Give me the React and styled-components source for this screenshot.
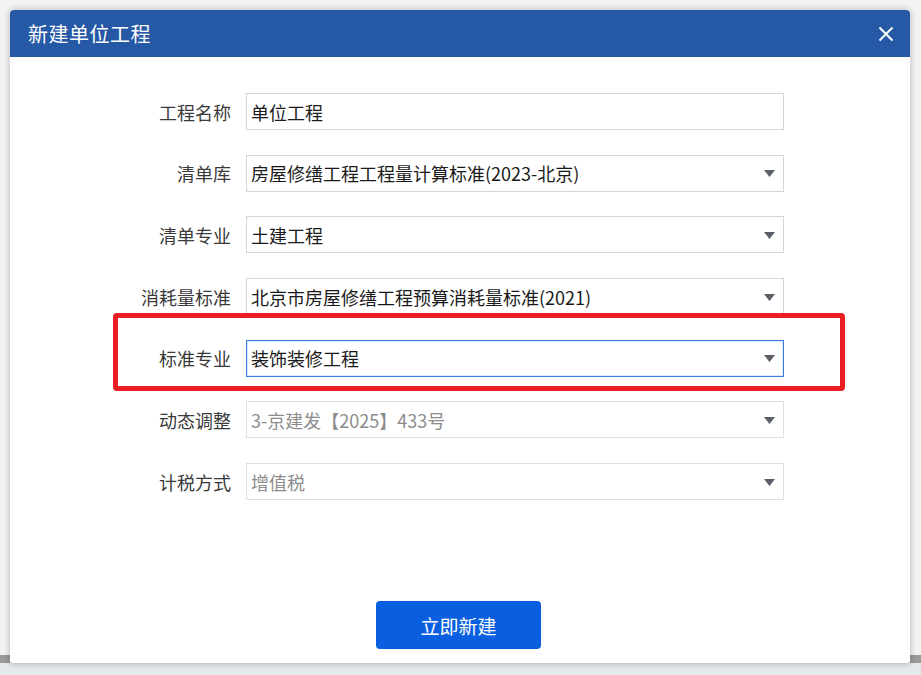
import React from "react";
import styled, { createGlobalStyle } from "styled-components";

const GlobalStyle = createGlobalStyle`
	html, body {
		margin: 0;
		padding: 0;
	}
	body {
		font-family: "Noto Sans CJK SC", "Noto Sans", "Liberation Sans", sans-serif;
		background: #f3f3f3;
	}
	* {
		box-sizing: border-box;
	}
`;

const Page = styled.div`
	position: relative;
	width: 921px;
	height: 675px;
	display: flex;
	flex-direction: column;
	overflow: hidden;
`;

const Backdrop = styled.div`
	flex: 1;
	background: #f3f3f3;
`;

const Strip = styled.div`
	height: 8px;
	background: #9b9b9b;
`;

const Floor = styled.div`
	height: 12px;
	background: #e4e8ed;
`;

const Dialog = styled.div`
	position: absolute;
	left: 10px;
	top: 10px;
	width: 900px;
	height: 653px;
	background: #fff;
	border-radius: 4px 4px 2px 2px;
	box-shadow: 0 0 6px rgba(0, 0, 0, 0.28);
	display: flex;
	flex-direction: column;
`;

const Header = styled.header`
	height: 47px;
	flex: none;
	display: flex;
	align-items: center;
	justify-content: space-between;
	padding: 0 13px 0 18px;
	border-radius: 4px 4px 0 0;
	background: #2559a5;
	color: #fff;
	font-size: 20px;
	letter-spacing: 0.5px;
`;

const CloseButton = styled.button`
	display: inline-flex;
	align-items: center;
	justify-content: center;
	width: 22px;
	height: 22px;
	padding: 0;
	border: none;
	background: none;
	cursor: pointer;
`;

const Body = styled.div`
	flex: 1;
	display: flex;
	flex-direction: column;
	padding: 36px 0 14px 101px;
`;

const Form = styled.div`
	display: flex;
	flex-direction: column;
	gap: 24.7px;
`;

const Row = styled.div`
	position: relative;
	display: flex;
	align-items: center;
	height: 37px;
`;

const Label = styled.label`
	width: 120px;
	margin-right: 15px;
	text-align: right;
	font-size: 18px;
	line-height: 1;
	color: #3a3a3a;
	white-space: nowrap;
`;

const Field = styled.div`
	position: relative;
	width: 538px;
	height: 37px;
	display: flex;
	align-items: center;
	padding: 0 30px 0 4px;
	border: 1px solid ${(p) => (p.$active ? "#3b7de0" : p.$disabled ? "#e0e0e0" : "#d6d6d6")};
	box-shadow: ${(p) => (p.$active ? "inset 0 0 0 1px #dbe8fb" : "none")};
	background: #fff;
	font-size: 18px;
	line-height: 1;
	color: ${(p) => (p.$disabled ? "#8c8c8c" : "#1a1a1a")};
	white-space: nowrap;
	overflow: hidden;
`;

const Arrow = styled.svg`
	position: absolute;
	right: 8px;
	top: 50%;
	margin-top: -3px;
`;

const Highlight = styled.div`
	position: absolute;
	left: 2px;
	right: 65px;
	top: -27px;
	bottom: -14px;
	border: 5px solid #ec1c24;
	border-radius: 4px;
	pointer-events: none;
`;

const Footer = styled.div`
	margin-top: auto;
	display: flex;
	padding-left: 265px;
`;

const SubmitButton = styled.button`
	width: 165px;
	height: 48px;
	border: none;
	border-radius: 4px;
	background: #0a5fe0;
	color: #fff;
	font-family: inherit;
	font-size: 19px;
	cursor: pointer;
`;

const fields = [
	{ label: "工程名称", value: "单位工程", select: false },
	{ label: "清单库", value: "房屋修缮工程工程量计算标准(2023-北京)", select: true },
	{ label: "清单专业", value: "土建工程", select: true },
	{ label: "消耗量标准", value: "北京市房屋修缮工程预算消耗量标准(2021)", select: true },
	{ label: "标准专业", value: "装饰装修工程", select: true, active: true },
	{ label: "动态调整", value: "3-京建发【2025】433号", select: true, disabled: true },
	{ label: "计税方式", value: "增值税", select: true, disabled: true },
];

const App = () => {
	return (
		<Page>
			<GlobalStyle />
			<Backdrop />
			<Strip />
			<Floor />
			<Dialog>
				<Header>
					<span>新建单位工程</span>
					<CloseButton aria-label="关闭">
						<svg width="16" height="16" viewBox="0 0 16 16">
							<path d="M1.5 1.5 L14.5 14.5 M14.5 1.5 L1.5 14.5" stroke="#fff" strokeWidth="2" />
						</svg>
					</CloseButton>
				</Header>
				<Body>
					<Form>
						{fields.map((f) => (
							<Row key={f.label}>
								{f.active && <Highlight />}
								<Label>{f.label}</Label>
								<Field $active={f.active} $disabled={f.disabled}>
									{f.value}
									{f.select && (
										<Arrow width="11" height="7" viewBox="0 0 11 7">
											<polygon points="0,0 11,0 5.5,7" fill="#5a5e66" />
										</Arrow>
									)}
								</Field>
							</Row>
						))}
					</Form>
					<Footer>
						<SubmitButton>立即新建</SubmitButton>
					</Footer>
				</Body>
			</Dialog>
		</Page>
	);
};

export default App;
